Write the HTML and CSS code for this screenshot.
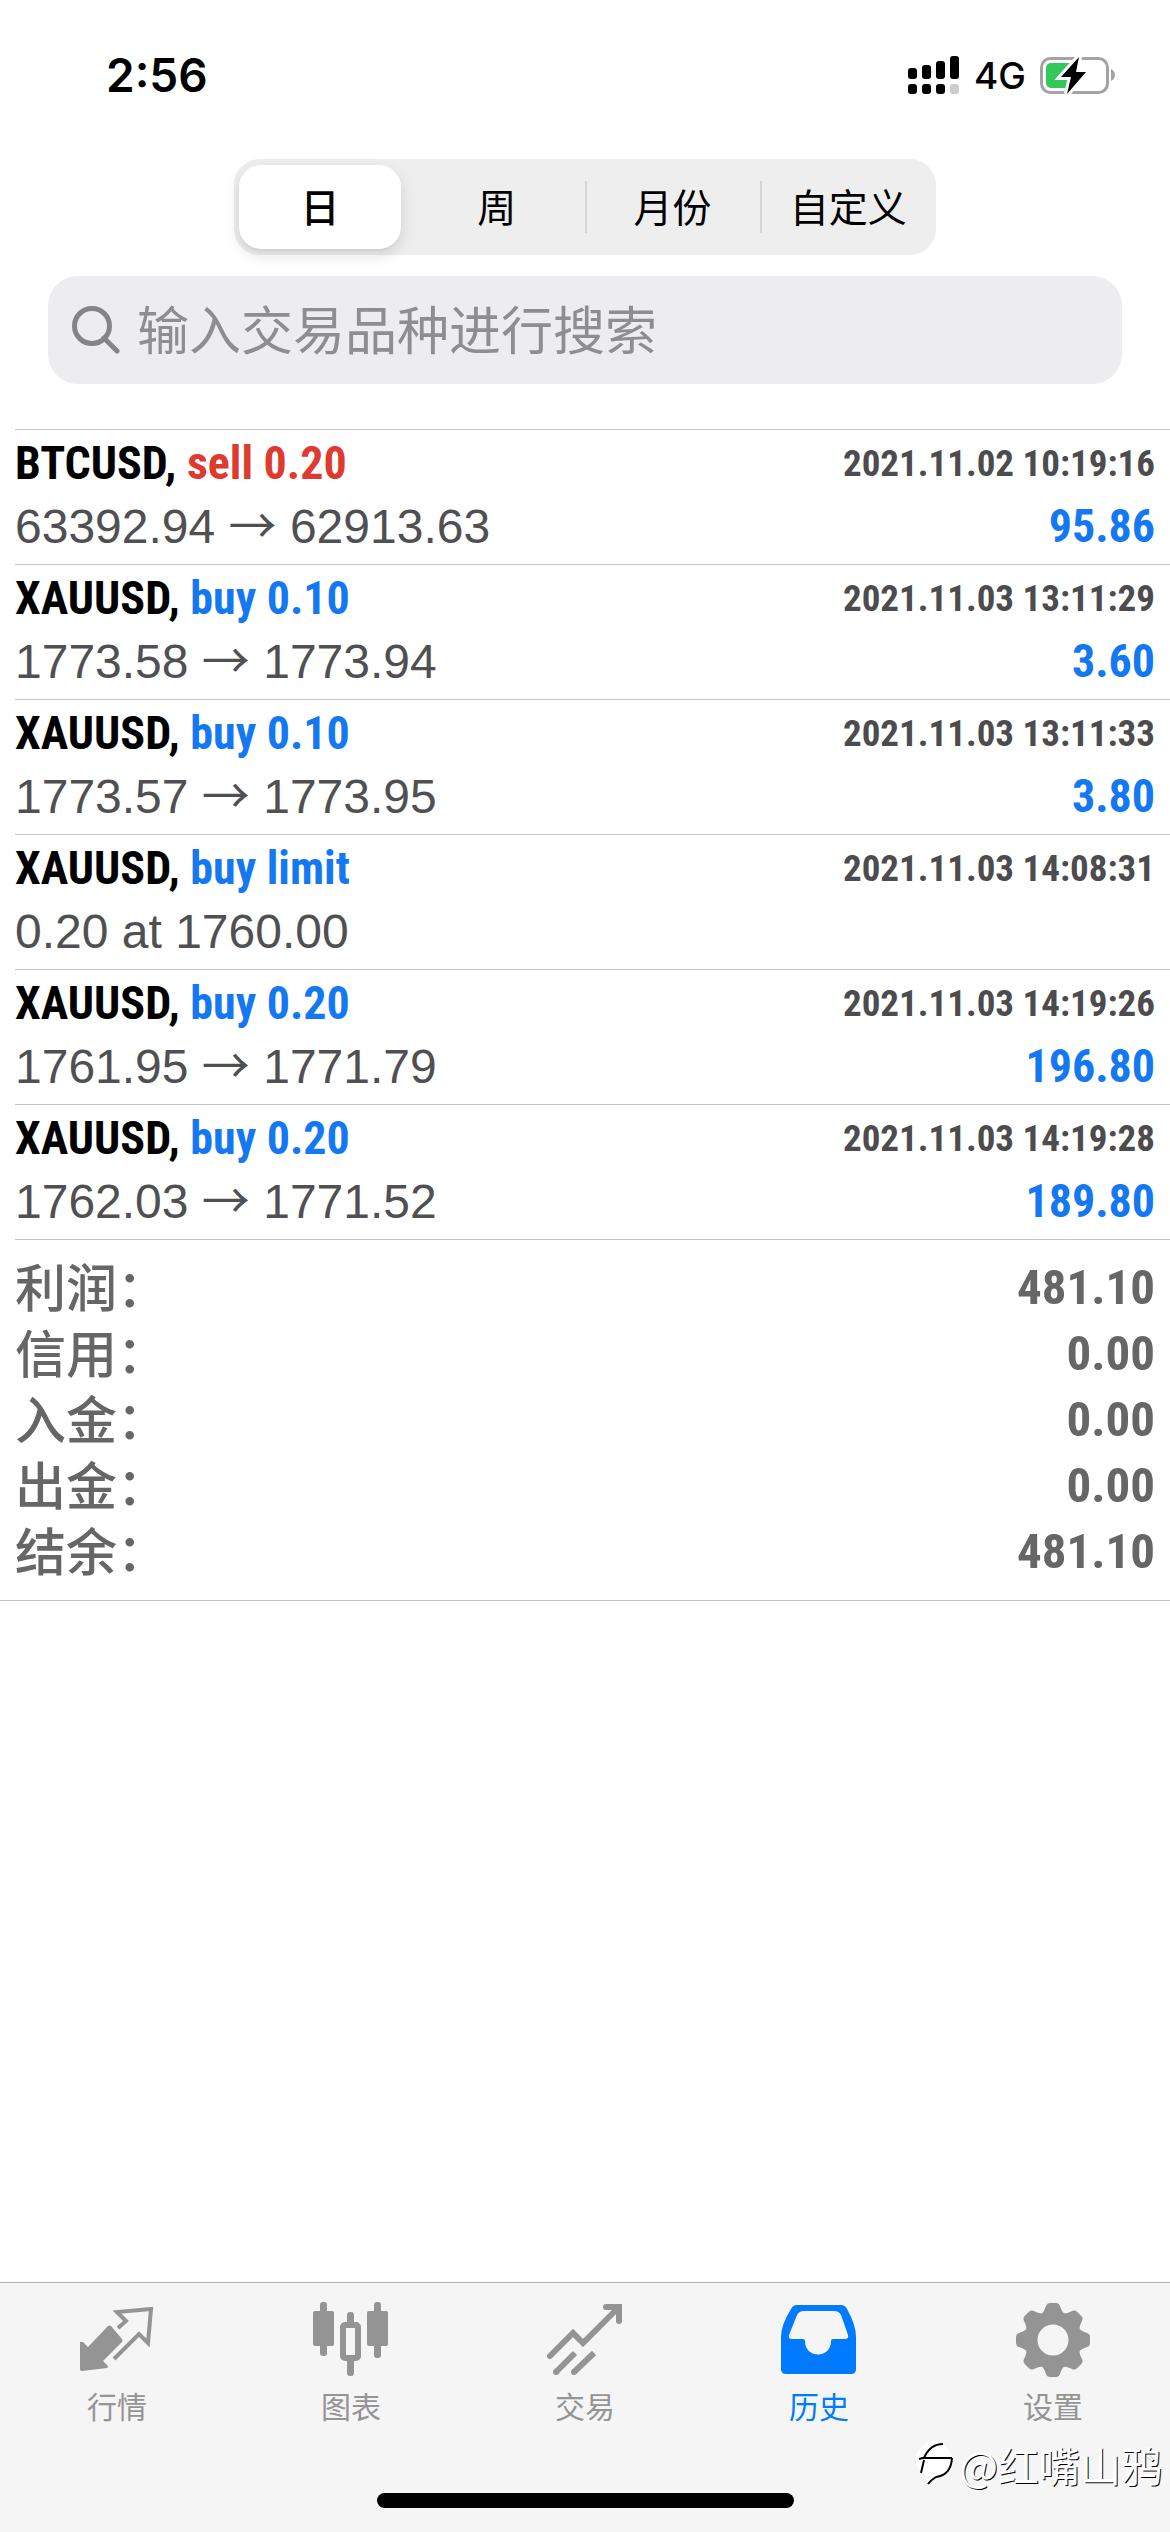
FILE: index.html
```html
<!DOCTYPE html>
<html lang="zh-CN">
<head>
<meta charset="utf-8">
<meta name="viewport" content="width=device-width, initial-scale=1">
<title>历史</title>
<link rel="stylesheet" href="styles.css">
</head>
<body>
<header class="status">
  <time class="clock">2:56</time>
  <div class="status-right">
    <svg class="signal" viewBox="0 0 52 38" aria-hidden="true">
      <rect x="0" y="12" width="9" height="11" rx="3"/><rect x="14" y="9" width="9" height="14" rx="3"/><rect x="28" y="5" width="9" height="18" rx="3"/><rect x="42" y="0" width="9" height="23" rx="3"/>
      <rect x="0" y="28" width="9" height="10" rx="3"/><rect x="14" y="28" width="9" height="10" rx="3"/><rect x="28" y="28" width="9" height="10" rx="3"/><rect x="42" y="28" width="9" height="10" rx="3" fill="#ccc"/>
    </svg>
    <span class="network">4G</span>
    <svg class="battery" viewBox="0 0 76 38" aria-hidden="true">
      <rect x="1.5" y="2.5" width="66" height="34" rx="9" fill="none" stroke="#a3a3a5" stroke-width="3"/>
      <path d="M71 13q4 2 4 6t-4 6z" fill="#a3a3a5"/>
      <rect x="6" y="7" width="28" height="25" rx="5" fill="#34c759"/>
      <path d="M39 1L21 21h10l-4 17L46 16H36z" fill="#000" stroke="#fff" stroke-width="6" paint-order="stroke"/>
    </svg>
  </div>
</header>

<main class="content">
  <div class="segments" role="group" aria-label="期间">
    <button class="segment segment-on" type="button">日</button>
    <button class="segment" type="button">周</button>
    <button class="segment segment-line" type="button">月份</button>
    <button class="segment segment-line" type="button">自定义</button>
  </div>

  <label class="search">
    <svg class="search-icon" viewBox="0 0 48 48" aria-hidden="true"><circle cx="20" cy="20" r="17.5"/><path d="M32 32L45 45"/></svg>
    <input class="search-input" type="search" placeholder="输入交易品种进行搜索" aria-label="搜索">
  </label>

  <ul class="deals">
    <li class="deal">
      <div class="line"><h2 class="symbol">BTCUSD, <span class="sell">sell 0.20</span></h2><time class="date">2021.11.02 10:19:16</time></div>
      <div class="line"><span class="price">63392.94 <span class="arrow">→</span> 62913.63</span><span class="profit">95.86</span></div>
    </li>
    <li class="deal">
      <div class="line"><h2 class="symbol">XAUUSD, <span class="buy">buy 0.10</span></h2><time class="date">2021.11.03 13:11:29</time></div>
      <div class="line"><span class="price">1773.58 <span class="arrow">→</span> 1773.94</span><span class="profit">3.60</span></div>
    </li>
    <li class="deal">
      <div class="line"><h2 class="symbol">XAUUSD, <span class="buy">buy 0.10</span></h2><time class="date">2021.11.03 13:11:33</time></div>
      <div class="line"><span class="price">1773.57 <span class="arrow">→</span> 1773.95</span><span class="profit">3.80</span></div>
    </li>
    <li class="deal">
      <div class="line"><h2 class="symbol">XAUUSD, <span class="buy">buy limit</span></h2><time class="date">2021.11.03 14:08:31</time></div>
      <div class="line"><span class="price">0.20 at 1760.00</span></div>
    </li>
    <li class="deal">
      <div class="line"><h2 class="symbol">XAUUSD, <span class="buy">buy 0.20</span></h2><time class="date">2021.11.03 14:19:26</time></div>
      <div class="line"><span class="price">1761.95 <span class="arrow">→</span> 1771.79</span><span class="profit">196.80</span></div>
    </li>
    <li class="deal">
      <div class="line"><h2 class="symbol">XAUUSD, <span class="buy">buy 0.20</span></h2><time class="date">2021.11.03 14:19:28</time></div>
      <div class="line"><span class="price">1762.03 <span class="arrow">→</span> 1771.52</span><span class="profit">189.80</span></div>
    </li>
  </ul>

  <dl class="totals">
    <div class="total"><dt>利润：</dt><dd>481.10</dd></div>
    <div class="total"><dt>信用：</dt><dd>0.00</dd></div>
    <div class="total"><dt>入金：</dt><dd>0.00</dd></div>
    <div class="total"><dt>出金：</dt><dd>0.00</dd></div>
    <div class="total"><dt>结余：</dt><dd>481.10</dd></div>
  </dl>
</main>

<footer class="bottom">
  <nav class="tabs">
    <a class="tab" href="#quotes">
      <svg class="tab-icon" viewBox="0 0 76 76" aria-hidden="true">
        <path d="M1 40v27q0 2 2 2l25-3q2-1 0-3l-4-4 19-19q1-2 0-3L32 24q-2-1-3 0L9 45l-5-5z" fill="currentColor"/>
        <path d="M39 26l8-7-9-9 34-3-3 34-9-9L35 57" fill="none" stroke="currentColor" stroke-width="4"/>
      </svg>
      <span>行情</span>
    </a>
    <a class="tab" href="#chart">
      <svg class="tab-icon" viewBox="0 0 76 76" aria-hidden="true">
        <g fill="currentColor"><rect x="0" y="9" width="21" height="35" rx="2"/><rect x="7" y="0" width="7" height="54" rx="3"/><rect x="54" y="9" width="21" height="35" rx="2"/><rect x="61" y="0" width="7" height="56" rx="3"/><rect x="34" y="10" width="7" height="14" rx="3"/><rect x="34" y="54" width="7" height="20" rx="3"/></g>
        <rect x="30" y="23" width="15" height="33" rx="2" fill="none" stroke="currentColor" stroke-width="6"/>
      </svg>
      <span>图表</span>
    </a>
    <a class="tab" href="#trade">
      <svg class="tab-icon" viewBox="0 0 76 76" aria-hidden="true">
        <g fill="none" stroke="currentColor" stroke-width="6"><path d="M3 54L26 31l10 10L71 6" stroke-linecap="round"/><path d="M59 5h13v14" stroke-linecap="round"/><path d="M9 70L28 51M27 70L47 51"/><path d="M9 70h0M27 70h0" stroke-linecap="round"/></g>
      </svg>
      <span>交易</span>
    </a>
    <a class="tab tab-on" href="#history" aria-current="page">
      <svg class="tab-icon" viewBox="0 0 76 76" aria-hidden="true">
        <path fill="currentColor" fill-rule="evenodd" d="M16 3h44q4 0 6 4Q75 23 75 35v32q0 5-5 5H5q-5 0-5-5V35Q0 23 10 7q2-4 6-4zM23 9q-5 0-7 4L8 33q-1 4 3 4h11q2 0 2 2c0 18 26 18 26 0q0-2 2-2h12q4 0 3-4L60 13q-2-4-7-4z"/>
      </svg>
      <span>历史</span>
    </a>
    <a class="tab" href="#settings">
      <svg class="tab-icon" viewBox="0 0 76 76" aria-hidden="true">
        <circle cx="38" cy="38" r="22" fill="none" stroke="currentColor" stroke-width="13"/>
        <g fill="currentColor">
          <path id="tooth" d="M24 14Q29 11 31 4q1-3 4-3h6q3 0 4 3 2 7 7 10z"/>
          <use href="#tooth" transform="rotate(45 38 38)"/><use href="#tooth" transform="rotate(90 38 38)"/><use href="#tooth" transform="rotate(135 38 38)"/><use href="#tooth" transform="rotate(180 38 38)"/><use href="#tooth" transform="rotate(225 38 38)"/><use href="#tooth" transform="rotate(270 38 38)"/><use href="#tooth" transform="rotate(315 38 38)"/>
        </g>
      </svg>
      <span>设置</span>
    </a>
  </nav>
  <div class="home-bar"></div>
  <div class="watermark">
    <svg class="mark" viewBox="0 0 42 48" aria-hidden="true">
      <path d="M20 1a19 19 0 0 1 19 19q0 14-15 17l-9 8-1-8A19 19 0 0 1 20 1z" fill="#fff"/>
      <path d="M11 18Q17 4 30 4M6 19l4-1h29M11 20L8 33M39 18Q38 35 23 37q-5 3-8 7" fill="none" stroke="#000" stroke-width="2"/>
    </svg>
    <span>@红嘴山鸦</span>
  </div>
</footer>
</body>
</html>
```
FILE: styles.css
```css
* {
  box-sizing: border-box;
}

body {
  display: flex;
  flex-direction: column;
  min-height: 100vh;
  margin: 0;
  background: #fff;
  color: #000;
  font-family: "Liberation Sans", "Noto Sans CJK SC", sans-serif;
}

/* Status bar */
.status {
  display: flex;
  align-items: center;
  justify-content: space-between;
  height: 148px;
  padding: 2px 54px 0 106px;
  font-family: Inter, sans-serif;
}

.clock {
  font-size: 46px;
  font-weight: 600;
}

.status-right {
  display: flex;
  align-items: center;
  gap: 14px;
}

.signal {
  width: 52px;
  height: 38px;
}

.network {
  font-size: 37px;
  font-weight: 500;
}

.battery {
  width: 76px;
  height: 38px;
}

.content {
  flex: 1;
}

/* Period switch */
.segments {
  display: flex;
  width: 60%;
  height: 96px;
  margin: 11px auto 0;
  padding: 6px 0;
  border-radius: 26px;
  background: #eee;
}

.segment {
  position: relative;
  flex: 1;
  padding: 0 0 4px;
  border: 0;
  background: none;
  color: #000;
  font: 400 39px/80px "Noto Sans CJK SC", sans-serif;
}

.segment-on {
  flex: 0 0 162px;
  margin: 0 8px 0 5px;
  border-radius: 22px;
  background: #fff;
  box-shadow: 0 6px 16px rgba(0, 0, 0, 0.12), 0 2px 2px rgba(0, 0, 0, 0.04);
  font-weight: 500;
}

.segment-line::before {
  content: "";
  position: absolute;
  top: 16px;
  bottom: 16px;
  left: 0;
  width: 2px;
  background: #d4d4d6;
}

/* Search */
.search {
  display: flex;
  align-items: center;
  gap: 17px;
  height: 108px;
  margin: 21px 48px 45px;
  padding: 0 24px;
  border-radius: 30px;
  background: #ededef;
}

.search-icon {
  flex: none;
  width: 48px;
  height: 48px;
  fill: none;
  stroke: #858587;
  stroke-width: 5;
  stroke-linecap: round;
}

.search-input {
  flex: 1;
  min-width: 0;
  padding: 0 0 4px;
  border: 0;
  outline: 0;
  background: none;
  color: #000;
  font: 400 52px/76px "Noto Sans CJK SC", sans-serif;
}

.search-input::placeholder {
  color: #8e8e90;
}

/* Deals */
.deals {
  margin: 0 0 0 15px;
  padding: 0;
  border-top: 1px solid #c4c4c6;
  list-style: none;
}

.deal {
  height: 135px;
  padding: 2px 15px 0 0;
  border-bottom: 1px solid #c4c4c6;
}

.line {
  display: flex;
  align-items: center;
  justify-content: space-between;
  height: 63px;
  line-height: 63px;
}

.symbol,
.date,
.profit,
.total dd {
  margin: 0;
  font-family: "Roboto Condensed", "Liberation Sans Narrow", "Liberation Sans", sans-serif;
  font-weight: 700;
}

.symbol,
.profit {
  font-size: 46px;
}

.date {
  color: #4c4c4f;
  font-size: 37px;
}

.price {
  color: #505052;
  font-size: 48px;
}

.arrow {
  font-family: "Noto Sans CJK SC", sans-serif;
  line-height: 1;
}

.buy,
.profit {
  color: #1478f2;
}

.sell {
  color: #df3a2f;
}

/* Totals */
.totals {
  margin: 0;
  padding: 15px;
  border-bottom: 1px solid #c4c4c6;
  color: #666;
}

.total {
  display: flex;
  justify-content: space-between;
  height: 66px;
}

.total dt {
  font: 500 51px/60px "Noto Sans CJK SC", sans-serif;
}

.total dd {
  font-size: 49px;
  line-height: 66px;
}

/* Tab bar */
.bottom {
  position: relative;
  border-top: 1px solid #b0b0b2;
  background: #f5f5f5;
}

.tabs {
  display: flex;
  height: 210px;
}

.tab {
  display: flex;
  flex: 1;
  flex-direction: column;
  align-items: center;
  padding-top: 19px;
  color: #949494;
  font: 400 30px/54px "Noto Sans CJK SC", sans-serif;
  text-decoration: none;
}

.tab-icon {
  width: 76px;
  height: 76px;
}

.tab-on {
  color: #007aff;
}

.home-bar {
  width: 417px;
  height: 15px;
  margin: 0 auto 24px;
  border-radius: 8px;
  background: #000;
}

.watermark {
  position: absolute;
  right: 8px;
  bottom: 38px;
  display: flex;
  align-items: center;
  gap: 4px;
  color: #fff;
  font: 400 41px/60px "Noto Sans CJK SC", sans-serif;
  text-shadow: 1px 1px 0 #000;
}

.mark {
  width: 42px;
  height: 48px;
}
```
